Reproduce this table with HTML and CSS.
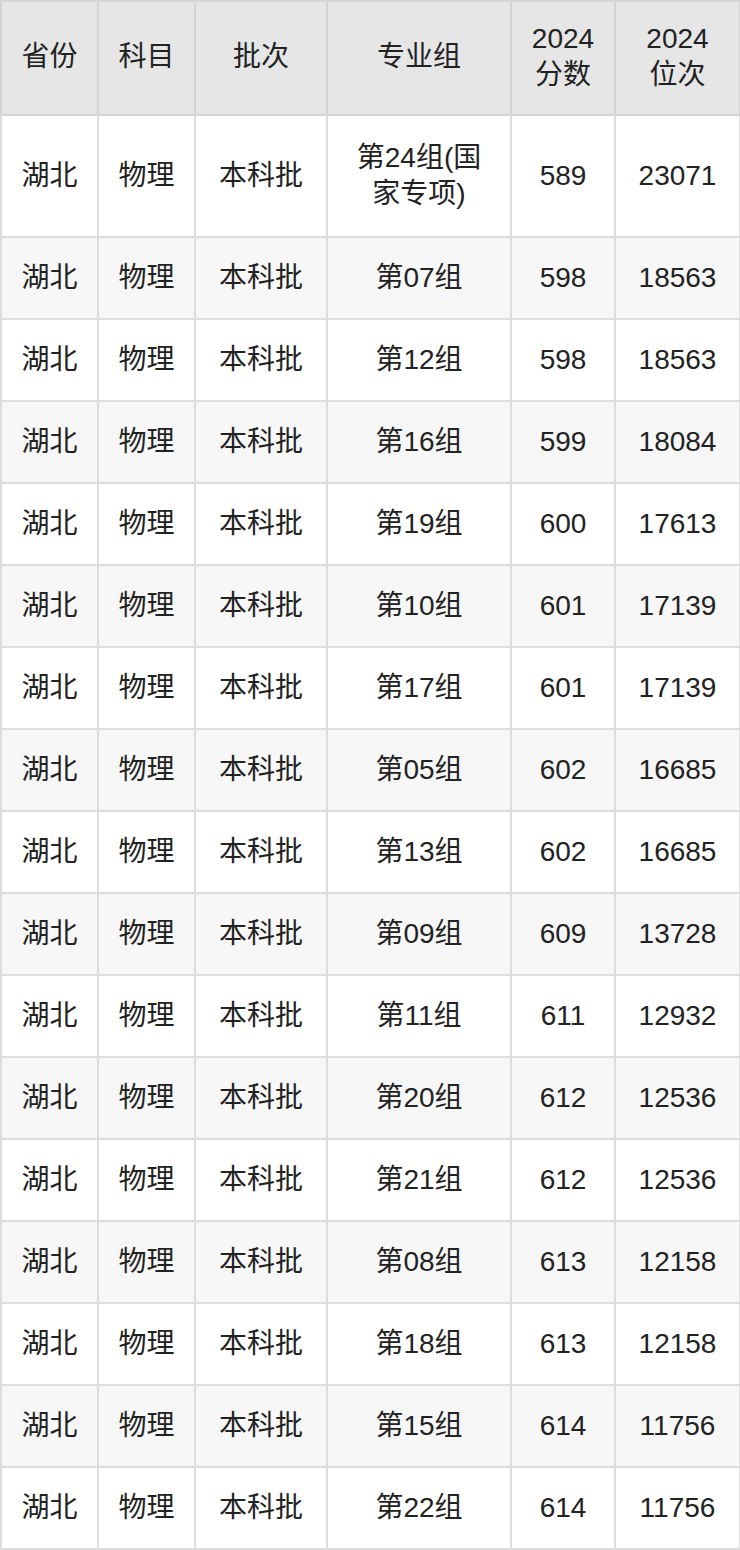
FILE: index.html
```html
<!DOCTYPE html>
<html lang="zh">
<head>
<meta charset="utf-8">
<link rel="stylesheet" href="styles.css">
</head>
<body>
<table class="score-table">
  <colgroup>
    <col class="c1"><col class="c2"><col class="c3"><col class="c4"><col class="c5"><col class="c6">
  </colgroup>
  <thead>
    <tr class="head-row">
      <th>省份</th><th>科目</th><th>批次</th><th>专业组</th><th>2024<br>分数</th><th>2024<br>位次</th>
    </tr>
  </thead>
  <tbody>
    <tr class="tall-row"><td>湖北</td><td>物理</td><td>本科批</td><td>第24组(国<br>家专项)</td><td>589</td><td>23071</td></tr>
    <tr><td>湖北</td><td>物理</td><td>本科批</td><td>第07组</td><td>598</td><td>18563</td></tr>
    <tr><td>湖北</td><td>物理</td><td>本科批</td><td>第12组</td><td>598</td><td>18563</td></tr>
    <tr><td>湖北</td><td>物理</td><td>本科批</td><td>第16组</td><td>599</td><td>18084</td></tr>
    <tr><td>湖北</td><td>物理</td><td>本科批</td><td>第19组</td><td>600</td><td>17613</td></tr>
    <tr><td>湖北</td><td>物理</td><td>本科批</td><td>第10组</td><td>601</td><td>17139</td></tr>
    <tr><td>湖北</td><td>物理</td><td>本科批</td><td>第17组</td><td>601</td><td>17139</td></tr>
    <tr><td>湖北</td><td>物理</td><td>本科批</td><td>第05组</td><td>602</td><td>16685</td></tr>
    <tr><td>湖北</td><td>物理</td><td>本科批</td><td>第13组</td><td>602</td><td>16685</td></tr>
    <tr><td>湖北</td><td>物理</td><td>本科批</td><td>第09组</td><td>609</td><td>13728</td></tr>
    <tr><td>湖北</td><td>物理</td><td>本科批</td><td>第11组</td><td>611</td><td>12932</td></tr>
    <tr><td>湖北</td><td>物理</td><td>本科批</td><td>第20组</td><td>612</td><td>12536</td></tr>
    <tr><td>湖北</td><td>物理</td><td>本科批</td><td>第21组</td><td>612</td><td>12536</td></tr>
    <tr><td>湖北</td><td>物理</td><td>本科批</td><td>第08组</td><td>613</td><td>12158</td></tr>
    <tr><td>湖北</td><td>物理</td><td>本科批</td><td>第18组</td><td>613</td><td>12158</td></tr>
    <tr><td>湖北</td><td>物理</td><td>本科批</td><td>第15组</td><td>614</td><td>11756</td></tr>
    <tr><td>湖北</td><td>物理</td><td>本科批</td><td>第22组</td><td>614</td><td>11756</td></tr>
  </tbody>
</table>
</body>
</html>
```
FILE: styles.css
```css
html, body {
  margin: 0;
  padding: 0;
  background: #ffffff;
}

.score-table {
  width: 739px;
  table-layout: fixed;
  border-collapse: collapse;
  font-family: "Liberation Sans", "Noto Sans CJK SC", sans-serif;
  font-size: 28px;
  line-height: 36px;
  color: #222222;
}

.c1 { width: 97px; }
.c2 { width: 97px; }
.c3 { width: 132px; }
.c4 { width: 184px; }
.c5 { width: 104px; }
.c6 { width: 125px; }

.score-table th,
.score-table td {
  border: 2px solid #dddddd;
  text-align: center;
  vertical-align: middle;
  padding: 0 4px;
  height: 82px;
  box-sizing: border-box;
}

.score-table th {
  font-weight: normal;
  background: #e6e6e6;
  border-color: #d4d4d4;
}

.head-row th {
  height: 114px;
  padding-bottom: 3px;
}

.tall-row td {
  height: 122px;
}

.score-table tbody tr:nth-child(even) td {
  background: #f7f7f7;
}
```
